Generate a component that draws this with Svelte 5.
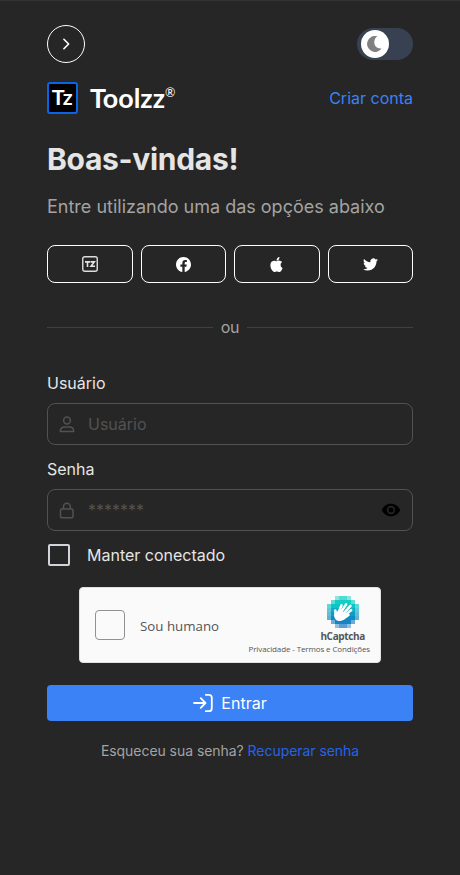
<script>
  let user = $state('');
  let password = $state('');

  // Pixel mosaic behind the captcha hand: [row, first column, last column]
  const mosaic = [
    [0, 2, 5], [1, 1, 6], [2, 0, 7], [3, 0, 7],
    [4, 0, 7], [5, 0, 7], [6, 1, 6], [7, 2, 5]
  ];
  const tones = ['#4fdcd3', '#12cdc4', '#0fc4c6', '#0ab0c4', '#0c9dc2', '#0c8cc0', '#1b83c2', '#5a9fd4'];
  const cells = mosaic.flatMap(([row, from, to]) =>
    Array.from({ length: to - from + 1 }, (_, i) => ({
      x: (from + i) * 4,
      y: row * 4,
      fill: tones[row],
      opacity: i === 0 || i === to - from ? 0.65 : 1
    }))
  );
</script>

<main>
  <div class="top">
    <button class="round" aria-label="Avançar">
      <svg width="18" height="18" viewBox="0 0 24 24" fill="none" stroke="#fff" stroke-width="2.2" stroke-linecap="round" stroke-linejoin="round"><path d="M9.200 5.700l6.300 6.300-6.300 6.300" /></svg>
    </button>
    <button class="toggle" aria-label="Tema escuro">
      <span class="knob">
        <svg width="16" height="16" viewBox="0 0 16 16"><path d="M10.300 .2A8 8 0 1 0 14.800 12.300C11 13.200 7.400 10.600 7.300 6.500C7.200 3.500 8.600 1.300 10.300 .2z" fill="#808080" /></svg>
      </span>
    </button>
  </div>

  <div class="brand">
    <svg width="130" height="32" viewBox="0 0 130 32">
      <rect x="1" y="1" width="29" height="30" rx="2" fill="#000" stroke="#0b63e5" stroke-width="2" />
      <g transform="translate(4.800 23) scale(1 1)"><text class="logo" font-size="21.500" font-weight="700">Tz</text></g>
      <g transform="translate(43 26)"><text class="logo" font-size="26.500" font-weight="700" textLength="75" lengthAdjust="spacingAndGlyphs">Toolzz</text></g>
      <text x="118" y="14.500" class="logo" font-size="12.500">®</text>
    </svg>
    <a href="#signup">Criar conta</a>
  </div>

  <h1>Boas-vindas!</h1>
  <p class="sub">Entre utilizando uma das opções abaixo</p>

  <div class="social">
    <button aria-label="Toolzz">
      <svg width="16" height="16" viewBox="0 0 16 16"><rect x=".75" y=".75" width="14.500" height="14.500" rx="2" fill="none" stroke="#ddd" stroke-width="1.400" /><path d="M3 5.900h5M5.500 5.900v5M8.500 5.900h3.800L9 10.200h4" fill="none" stroke="#e5e5e5" stroke-width="1.600" /></svg>
    </button>
    <button aria-label="Facebook">
      <svg width="15" height="15" viewBox="0 0 16 16" fill="#fff"><path d="M16 8.049c0-4.446-3.582-8.050-8-8.050C3.580 0-.002 3.603-.002 8.050c0 4.017 2.926 7.347 6.750 7.951v-5.625h-2.030V8.050H6.750V6.275c0-2.017 1.195-3.131 3.022-3.131.876 0 1.791.157 1.791.157v1.980h-1.009c-.993 0-1.303.621-1.303 1.258v1.510h2.218l-.354 2.326H9.250V16c3.824-.604 6.750-3.934 6.750-7.951z" /></svg>
    </button>
    <button aria-label="Apple">
      <svg width="15" height="15" viewBox="0 0 24 24" fill="#fff"><path d="M12.152 6.896c-.948 0-2.415-1.078-3.960-1.040-2.040.027-3.910 1.183-4.961 3.014-2.117 3.675-.546 9.103 1.519 12.090 1.013 1.454 2.208 3.090 3.792 3.039 1.520-.065 2.090-.987 3.935-.987 1.831 0 2.350.987 3.960.948 1.637-.026 2.676-1.480 3.676-2.948 1.156-1.688 1.636-3.325 1.662-3.415-.039-.013-3.182-1.221-3.220-4.857-.026-3.040 2.480-4.494 2.597-4.559-1.429-2.090-3.623-2.324-4.390-2.376-2-.156-3.675 1.090-4.610 1.090zM15.530 3.830c.843-1.012 1.400-2.427 1.245-3.830-1.207.052-2.662.805-3.532 1.818-.780.896-1.454 2.338-1.273 3.714 1.338.104 2.715-.688 3.559-1.701" /></svg>
    </button>
    <button aria-label="Twitter">
      <svg width="15" height="15" viewBox="0 0 24 24" fill="#fff"><path d="M23.953 4.570a10 10 0 01-2.825.775 4.958 4.958 0 002.163-2.723c-.951.555-2.005.959-3.127 1.184a4.920 4.920 0 00-8.384 4.482C7.690 8.095 4.067 6.130 1.640 3.162a4.822 4.822 0 00-.666 2.475c0 1.710.870 3.213 2.188 4.096a4.904 4.904 0 01-2.228-.616v.060a4.923 4.923 0 003.946 4.827 4.996 4.996 0 01-2.212.085 4.936 4.936 0 004.604 3.417 9.867 9.867 0 01-6.102 2.105c-.390 0-.779-.023-1.170-.067a13.995 13.995 0 007.557 2.209c9.053 0 13.998-7.496 13.998-13.985 0-.210 0-.420-.015-.630A9.935 9.935 0 0024 4.590z" /></svg>
    </button>
  </div>

  <div class="divider"><span>ou</span></div>

  <label class="name" for="user">Usuário</label>
  <div class="field">
    <svg width="16" height="17" viewBox="0 0 16 17" fill="none" stroke="#525252" stroke-width="1.500" stroke-linejoin="round"><circle cx="8" cy="4.500" r="3.400" /><path d="M1.300 15.500c0-3 2-4.500 4.500-4.500h4.400c2.500 0 4.500 1.500 4.500 4.500z" /></svg>
    <input id="user" type="text" placeholder="Usuário" bind:value={user} />
  </div>

  <label class="name" for="password">Senha</label>
  <div class="field">
    <svg width="16" height="17" viewBox="0 0 16 17" fill="none" stroke="#525252" stroke-width="1.500"><rect x="1.500" y="7" width="12.500" height="8.800" rx="1.200" /><path d="M4.500 7V4.600a3.400 3.400 0 0 1 6.800 0V7" /></svg>
    <input id="password" type="password" placeholder="*******" bind:value={password} />
    <svg class="eye" width="20" height="20" viewBox="0 0 24 24"><path fill="#000" d="M12 4.500C7 4.500 2.730 7.610 1 12c1.730 4.390 6 7.500 11 7.500s9.270-3.110 11-7.500c-1.730-4.390-6-7.500-11-7.500zM12 17a5 5 0 1 1 0-10 5 5 0 0 1 0 10zm0-8a3 3 0 1 0 0 6 3 3 0 0 0 0-6z" /></svg>
  </div>

  <label class="keep"><input type="checkbox" /><span>Manter conectado</span></label>

  <div class="captcha">
    <span class="box"></span>
    <span class="human">Sou humano</span>
    <div class="hc">
      <svg class="mark" width="32" height="32" viewBox="0 0 32 32">
        {#each cells as c}
          <rect x={c.x} y={c.y} width="4" height="4" fill={c.fill} opacity={c.opacity} shape-rendering="crispEdges" />
        {/each}
        <g stroke="#fff" stroke-width="2.500" stroke-linecap="round" fill="none">
          <path d="M11 18L14.500 9.200M13.500 17L19.200 8.200M16 18L23.500 9.800M17.500 20L24.200 14M8.800 20L8.300 14.500M16.500 22.500L21.500 19" />
        </g>
        <path d="M8 16L13 14.500l6.500 3c.2 3.800-2.500 7.400-6.500 7.600-4 .2-6.200-3.400-5.800-6.400z" fill="#fff" />
      </svg>
      <strong>hCaptcha</strong>
      <small>Privacidade - Termos e Condições</small>
    </div>
  </div>

  <button class="submit">
    <svg width="20" height="20" viewBox="0 0 20 20" fill="none" stroke="#fff" stroke-width="1.800" stroke-linecap="round" stroke-linejoin="round"><path d="M1 10h11.500M7.700 5.200l4.800 4.800-4.800 4.800M12.800 1.800h3a3 3 0 0 1 3 3v10.400a3 3 0 0 1-3 3h-3" /></svg>
    <span>Entrar</span>
  </button>

  <p class="recover">Esqueceu sua senha? <a href="#recover">Recuperar senha</a></p>
</main>

<style>
  :global(body) { background: #262626; }
  main {
    box-sizing: border-box;
    height: 875px;
    padding: 24px 47px 0;
    border-top: 1px solid #333;
    background: #262626;
    color: #e5e5e5;
    font: 16px/24px Inter, sans-serif;
    display: flex;
    flex-direction: column;
  }
  button { padding: 0; margin: 0; font: inherit; background: none; border: 0; color: inherit; }
  a { text-decoration: none; color: #3b82f6; }
  .top, .brand { display: flex; justify-content: space-between; align-items: center; }
  .top { height: 38px; }
  .round {
    width: 38px; height: 38px; box-sizing: border-box; border: 1px solid #fff; border-radius: 50%;
    display: flex; align-items: center; justify-content: center;
  }
  .toggle { width: 56px; height: 32px; box-sizing: border-box; border-radius: 16px; background: #374151; padding: 2px 4px; display: flex; align-items: center; }
  .knob { width: 28px; height: 28px; border-radius: 50%; background: #fff; display: flex; align-items: center; justify-content: center; }
  .brand { height: 32px; margin-top: 19px; }
  .logo { font-family: Lato, sans-serif; fill: #fff; }
  h1 { margin: 27px 0 0; font-size: 30px; line-height: 36px; font-weight: 700; letter-spacing: -0.3px; }
  .sub { margin: 16px 0 0; font-size: 18px; line-height: 28px; color: #a3a3a3; }
  .social { display: grid; grid-template-columns: repeat(4, 1fr); gap: 8px; margin-top: 24px; }
  .social button { height: 38px; border: 1px solid #fff; border-radius: 8px; display: flex; align-items: center; justify-content: center; }
  .divider { display: flex; align-items: center; gap: 8px; margin: 32px 0; color: #a3a3a3; }
  .divider span { letter-spacing: -0.2px; }
  .divider::before, .divider::after { content: ''; flex: 1; height: 1px; background: #404040; }
  .name { height: 24px; margin-bottom: 8px; }
  .field {
    height: 42px; box-sizing: border-box; border: 1px solid #525252; border-radius: 8px; margin-bottom: 12px;
    display: flex; align-items: center; padding: 0 11px;
  }
  .field input {
    flex: 1; min-width: 0; margin-left: 13px; padding: 0; border: 0; outline: 0; background: none; color: #e5e5e5;
    font: 16px/24px Inter, sans-serif;
  }
  .field input::placeholder { color: #525252; opacity: 1; }
  .keep { display: flex; align-items: center; height: 24px; }
  .keep input { appearance: none; width: 22px; height: 22px; margin: 0 17px 0 1px; box-sizing: border-box; border: 2px solid #d1d5db; border-radius: 2px; }
  .captcha {
    box-sizing: border-box; align-self: center; width: 302px; height: 76px; margin-top: 20px;
    background: #fafafa; border: 1px solid #e0e0e0; border-radius: 4px;
    display: flex; align-items: center; padding: 0 10px 0 15px; color: #555;
  }
  .box { width: 30px; height: 30px; box-sizing: border-box; border: 1px solid #919191; border-radius: 4px; }
  .human { margin: 2px 0 0 15px; font: 13.300px/20px "Open Sans", sans-serif; white-space: nowrap; }
  .hc { flex: 1; display: flex; flex-direction: column; align-items: flex-end; white-space: nowrap; }
  .mark { margin-right: 11px; }
  .hc strong { font: 700 10px/14px "Open Sans", sans-serif; letter-spacing: -0.35px; margin: 1px 5px 0 0; }
  .hc small { font: 8px/11px "Open Sans", sans-serif; letter-spacing: -0.12px; margin-left: -80px; }
  .submit {
    height: 36px; margin-top: 22px; border-radius: 4px; background: #3b82f6; color: #fff;
    display: flex; align-items: center; justify-content: center; gap: 8px;
  }
  .recover { margin: 20px 0 0; text-align: center; font-size: 14px; line-height: 20px; letter-spacing: -0.05px; color: #a3a3a3; }
  .recover a { color: #2563eb; }
</style>
